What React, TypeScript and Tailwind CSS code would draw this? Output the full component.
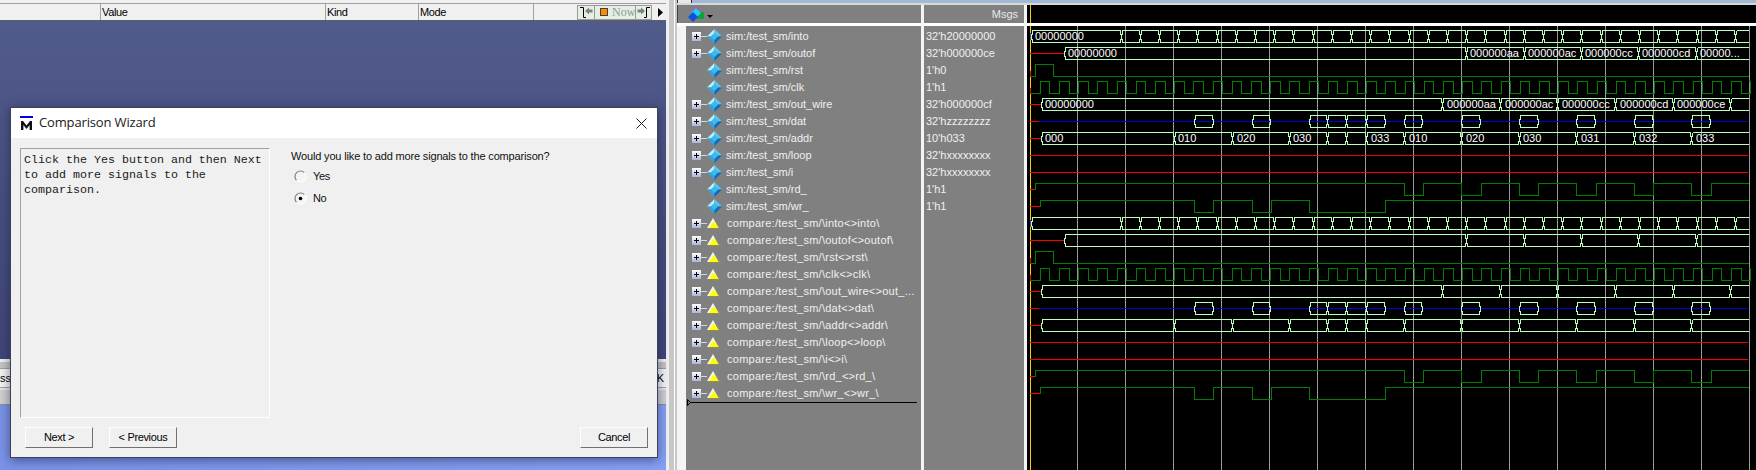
const SANS = "font-['Liberation_Sans',Arial,sans-serif]";

const ROW_H = 17;
const WAVE_END = 1748;
const rowTop = (i: number) => 30 + ROW_H * i;

// bus edges in page pixels, the viewBox of the wave svg is page coordinates
const intoEdges = [1031, ...Array.from({ length: 33 }, (_, k) => 1120.5 + 19.2 * k)];
const outofEdges = [1064, 1466, 1524, 1581, 1638, 1696];
const outWireEdges = [1041, 1442, 1500, 1557, 1615, 1673, 1730];
const addrEdges = [1041, 1174, 1232, 1289, 1327, 1346, 1366, 1404, 1461, 1519, 1576, 1634, 1691];
const datChunks = [
  [1194, 1213],
  [1252, 1270],
  [1309, 1327, 1346, 1366, 1385],
  [1404, 1422],
  [1461, 1480],
  [1519, 1538],
  [1576, 1595],
  [1634, 1653],
  [1691, 1710],
];
const rdEdges = [1404, 1423, 1461, 1481, 1519, 1538, 1576, 1596, 1634, 1653, 1691, 1711];
const wrEdges = [1194, 1213, 1252, 1271, 1309, 1385];

const outofLabels: [number, string][] = [
  [1068, "00000000"],
  [1470, "000000aa"],
  [1528, "000000ac"],
  [1585, "000000cc"],
  [1642, "000000cd"],
  [1700, "00000..."],
];
const outWireLabels: [number, string][] = [
  [1045, "00000000"],
  [1447, "000000aa"],
  [1505, "000000ac"],
  [1562, "000000cc"],
  [1620, "000000cd"],
  [1677, "000000ce"],
];
const addrLabels: [number, string][] = [
  [1045, "000"],
  [1178, "010"],
  [1237, "020"],
  [1293, "030"],
  [1371, "033"],
  [1409, "010"],
  [1466, "020"],
  [1523, "030"],
  [1581, "031"],
  [1639, "032"],
  [1696, "033"],
];

function busSegment(a: number, b: number, top: number, closed: boolean) {
  const t = top + 0.5;
  const bot = top + 12.5;
  const m = top + 6;
  const ax = Math.round(a) + 0.5;
  const bx = Math.round(b) + 0.5;
  const left = `M${ax + 1} ${t} V${m - 2} H${ax} V${m + 3} H${ax + 1} V${bot}`;
  if (!closed) return `${left} H${bx} M${ax + 1} ${t} H${bx}`;
  return `${left} H${bx - 1} V${m + 3} H${bx} V${m - 2} H${bx - 1} V${t} Z`;
}

function Bus({ row, edges, open = true }: { row: number; edges: number[]; open?: boolean }) {
  const top = rowTop(row);
  const all = open ? [...edges, WAVE_END] : edges;
  const d = all
    .slice(0, -1)
    .map((a, i) => busSegment(a, all[i + 1], top, !(open && i === all.length - 2)))
    .join(" ");
  return <path d={d} fill="none" stroke="#bcffbc" />;
}

// green logic trace, starts with a short red stub at the cursor
function Logic({ row, stub, startLow, edges }: { row: number; stub: number; startLow?: boolean; edges: number[] }) {
  const hi = rowTop(row) + 0.5;
  const lo = hi + 12;
  const mid = hi + 6;
  let level = true;
  let d = `M${stub + 0.5} ${startLow ? lo : mid} V${hi} `;
  for (const x of edges) {
    level = !level;
    d += `H${x + 0.5} V${level ? hi : lo} `;
  }
  d += `H${WAVE_END + 0.5}`;
  return (
    <>
      <path d={`M1030 ${startLow ? lo : mid} H${stub}`} stroke={startLow ? "#008000" : "#ff0000"} fill="none" />
      <path d={d} stroke="#008000" fill="none" />
    </>
  );
}

function Stub({ row, x }: { row: number; x: number }) {
  const y = rowTop(row) + 6.5;
  return <path d={`M1030 ${y} H${x}`} stroke="#ff0000" fill="none" />;
}

function SignalGroup({ base, labels }: { base: number; labels: boolean }) {
  const clkEdges = Array.from({ length: 74 }, (_, k) => Math.round(1049.4 + 9.6 * k));
  return (
    <g>
      <Bus row={base} edges={intoEdges} />
      <path d={`M1030.5 ${rowTop(base) + 3} V${rowTop(base) + 10}`} stroke="#4040c0" fill="none" />
      <Stub row={base + 1} x={1064} />
      <Bus row={base + 1} edges={outofEdges} />
      <Logic row={base + 2} stub={1035} startLow edges={[1053]} />
      <path d={`M1030.5 ${rowTop(base + 2) + 7} V${rowTop(base + 2) + 12}`} stroke="#ff0000" fill="none" />
      <Logic row={base + 3} stub={1040} startLow edges={clkEdges} />
      <path d={`M1030.5 ${rowTop(base + 3) + 7} V${rowTop(base + 3) + 12}`} stroke="#ff0000" fill="none" />
      <Stub row={base + 4} x={1041} />
      <Bus row={base + 4} edges={outWireEdges} />
      <Stub row={base + 5} x={1039} />
      <path d={`M1039 ${rowTop(base + 5) + 6.5} H${WAVE_END}`} stroke="#0000e0" fill="none" />
      {datChunks.map((chunk) => (
        <Bus key={chunk[0]} row={base + 5} edges={chunk} open={false} />
      ))}
      <Stub row={base + 6} x={1041} />
      <Bus row={base + 6} edges={addrEdges} />
      <path d={`M1030 ${rowTop(base + 7) + 6.5} H${WAVE_END}`} stroke="#f00000" fill="none" />
      <path d={`M1030 ${rowTop(base + 8) + 6.5} H${WAVE_END}`} stroke="#ff0000" fill="none" />
      <Logic row={base + 9} stub={1035} edges={rdEdges} />
      <Logic row={base + 10} stub={1040} edges={wrEdges} />
      {labels && (
        <g fill="#ffffff" fontSize="11" fontFamily="'Liberation Sans', Arial, sans-serif">
          <text x={1035} y={rowTop(base) + 10}>00000000</text>
          {outofLabels.map(([x, s]) => (
            <text key={x} x={x} y={rowTop(base + 1) + 10}>{s}</text>
          ))}
          {outWireLabels.map(([x, s]) => (
            <text key={x} x={x} y={rowTop(base + 4) + 10}>{s}</text>
          ))}
          {addrLabels.map(([x, s]) => (
            <text key={x} x={x} y={rowTop(base + 6) + 10}>{s}</text>
          ))}
        </g>
      )}
    </g>
  );
}

function Waves() {
  const grid = Array.from({ length: 15 }, (_, k) => 1077.5 + 48 * k);
  return (
    <svg width="729" height="444" viewBox="1027 26 729 444" shapeRendering="crispEdges" className="block">
      {grid.map((x) => (
        <path key={x} d={`M${x} 26 V470`} stroke="#9a9a9a" fill="none" />
      ))}
      <path d="M1030.5 26 V470" stroke="#ffc800" fill="none" />
      <SignalGroup base={0} labels />
      <SignalGroup base={11} labels={false} />
    </svg>
  );
}

function Diamond() {
  return (
    <svg width="15" height="15" viewBox="0 0 15 15" className="shrink-0">
      <polygon points="7.5,0 0,7.5 4,7.5 7.5,4" fill="#b8f0ff" />
      <polygon points="7.5,0 15,7.5 11,7.5 7.5,4" fill="#58c4f0" />
      <polygon points="0,7.5 7.5,15 7.5,11 4,7.5" fill="#30a4e0" />
      <polygon points="15,7.5 7.5,15 7.5,11 11,7.5" fill="#0c6cc0" />
      <polygon points="7.5,4 11,7.5 7.5,11 4,7.5" fill="#38bcf0" />
    </svg>
  );
}

function CompareTriangle() {
  return (
    <svg width="15" height="13" viewBox="0 0 15 13" className="shrink-0">
      <polygon points="6.5,1 15,12.5 1,12.5" fill="#8a8a60" />
      <polygon points="6,1 11.5,11 0,11" fill="#f4f4f0" />
      <polygon points="6.5,4.5 11.5,11 2,11" fill="#ffff00" />
    </svg>
  );
}

function PlusBox() {
  return (
    <svg width="15" height="9" viewBox="0 0 15 9" className="shrink-0" shapeRendering="crispEdges">
      <defs>
        <linearGradient id="plusFill" x1="0" y1="0" x2="0" y2="1">
          <stop offset="0" stopColor="#ffffff" />
          <stop offset="1" stopColor="#aab4dc" />
        </linearGradient>
      </defs>
      <rect x="0" y="0" width="9" height="9" fill="url(#plusFill)" />
      <path d="M2 4.5 H7 M4.5 2 V7" stroke="#000" fill="none" />
      <path d="M9 4.5 H15" stroke="#d8d8d8" fill="none" />
    </svg>
  );
}

const simRows: [string, string, boolean][] = [
  ["sim:/test_sm/into", "32'h20000000", true],
  ["sim:/test_sm/outof", "32'h000000ce", true],
  ["sim:/test_sm/rst", "1'h0", false],
  ["sim:/test_sm/clk", "1'h1", false],
  ["sim:/test_sm/out_wire", "32'h000000cf", true],
  ["sim:/test_sm/dat", "32'hzzzzzzzz", true],
  ["sim:/test_sm/addr", "10'h033", true],
  ["sim:/test_sm/loop", "32'hxxxxxxxx", true],
  ["sim:/test_sm/i", "32'hxxxxxxxx", true],
  ["sim:/test_sm/rd_", "1'h1", false],
  ["sim:/test_sm/wr_", "1'h1", false],
];

const compareRows = [
  "compare:/test_sm/\\into<>into\\",
  "compare:/test_sm/\\outof<>outof\\",
  "compare:/test_sm/\\rst<>rst\\",
  "compare:/test_sm/\\clk<>clk\\",
  "compare:/test_sm/\\out_wire<>out_...",
  "compare:/test_sm/\\dat<>dat\\",
  "compare:/test_sm/\\addr<>addr\\",
  "compare:/test_sm/\\loop<>loop\\",
  "compare:/test_sm/\\i<>i\\",
  "compare:/test_sm/\\rd_<>rd_\\",
  "compare:/test_sm/\\wr_<>wr_\\",
];

function WavePane() {
  return (
    <div className={`flex min-w-0 flex-1 flex-col ${SANS} text-[11px]`}>
      <div className="flex h-[3px] bg-[#a2b9d6]">
        <div className="h-full w-[15px] border-x border-[#303030] bg-[#e8e8e8]" />
      </div>
      <div className="h-[2px] bg-[#d8d8d8]" />
      <div className="flex flex-1">
        <div className="flex w-[244px] flex-col">
          <div className="flex h-[18px] items-center border-l border-[#404040] bg-[#808080] pl-[10px]">
            <svg width="16" height="16" viewBox="0 0 16 16">
              <polygon points="4,5 8,1 12,4 8,8" fill="#c040e0" />
              <rect x="9" y="6" width="7" height="7" fill="#10a040" />
              <polygon points="3,7 8,2 13,7 8,12" fill="#20d0f0" />
              <polygon points="0,11 5,6 10,11 5,16" fill="#1050e0" />
            </svg>
            <svg width="6" height="4" viewBox="0 0 6 4" className="ml-[3px] mt-[5px]">
              <polygon points="0,0 6,0 3,3" fill="#000" />
            </svg>
          </div>
          <div className="h-[3px] bg-white" />
          <div className="flex flex-1">
            <div className="w-[9px] bg-[#f4f4f4]" />
            <div className="flex-1 bg-[#808080] pt-[2px] text-[#f0f0f0]">
              {simRows.map(([name, , expand]) => (
                <div key={name} className="flex h-[17px] items-center pl-[6px]">
                  {expand ? <PlusBox /> : <div className="w-[15px] shrink-0" />}
                  <Diamond />
                  <span className="ml-[4px] whitespace-pre leading-none">{name}</span>
                </div>
              ))}
              {compareRows.map((name) => (
                <div key={name} className="flex h-[17px] items-center pl-[6px]">
                  <PlusBox />
                  <CompareTriangle />
                  <span className="ml-[5px] whitespace-pre leading-none tracking-[0.26px]">{name}</span>
                </div>
              ))}
              <div className="relative ml-[2px] mr-[4px] h-px bg-black">
                <svg width="4" height="7" viewBox="0 0 4 7" className="absolute -left-[1px] -top-[3px]">
                  <polygon points="0.5,0.5 3.5,3.5 0.5,6.5" fill="#808080" stroke="#000" />
                </svg>
              </div>
            </div>
          </div>
        </div>
        <div className="w-[3px] bg-[#f4f4f4]" />
        <div className="flex w-[100px] flex-col">
          <div className="flex h-[18px] items-center justify-end bg-[#808080] pr-[6px] text-[#e8e8e8]">Msgs</div>
          <div className="h-[3px] bg-white" />
          <div className="flex-1 bg-[#808080] pt-[2px] pl-[2px] text-[#f0f0f0]">
            {simRows.map(([name, msg]) => (
              <div key={name} className="flex h-[17px] items-center leading-none">
                {msg}
              </div>
            ))}
          </div>
        </div>
        <div className="w-[3px] bg-[#f4f4f4]" />
        <div className="flex w-[729px] flex-col bg-black">
          <div className="flex h-[18px] bg-black pl-[3px]">
            <div className="h-full w-px bg-[#ffc800]" />
          </div>
          <div className="h-[3px] bg-white" />
          <Waves />
        </div>
      </div>
    </div>
  );
}

function HeaderCell({ label, className }: { label: string; className: string }) {
  return (
    <div className={`flex h-full items-center border-l border-[#a0a0a0] pl-[1px] ${className}`}>{label}</div>
  );
}

function ListHeader() {
  return (
    <div className="flex h-[17px] items-center border-b border-[#606060] bg-[#f0f0f0] text-[11px] tracking-[-0.35px] text-black">
      <div className="w-[100px]" />
      <HeaderCell label="Value" className="w-[225px]" />
      <HeaderCell label="Kind" className="w-[93px]" />
      <HeaderCell label="Mode" className="w-[115px]" />
      <div className="h-full w-[44px] border-l border-[#a0a0a0]" />
      <div className="flex h-[15px] w-[75px] items-center border border-[#9a9a9a] bg-[#e4efe4]">
        <div className="flex h-full w-[17px] shrink-0 items-center justify-center border-r border-[#9a9a9a]">
          <svg width="14" height="12" viewBox="0 0 14 12">
            <path d="M1 1.5 H4.5 V11.5 H7" stroke="#000" fill="none" />
            <polygon points="6,5 10,1.5 10,3.5 13.5,3.5 13.5,6.5 10,6.5 10,8.5" fill="#808080" />
          </svg>
        </div>
        <div className="ml-[5px] size-[8px] shrink-0 border border-[#404040] bg-[#ff8c00]" />
        <span className="ml-[4px] font-['Liberation_Serif',serif] text-[12px] tracking-normal text-[#8c9c9c]">Now</span>
        <div className="ml-auto flex h-full w-[16px] shrink-0 items-center justify-center border-l border-[#9a9a9a]">
          <svg width="14" height="12" viewBox="0 0 14 12">
            <path d="M13 1.5 H9.5 V11.5 H7" stroke="#000" fill="none" />
            <polygon points="8,5 4,1.5 4,3.5 0.5,3.5 0.5,6.5 4,6.5 4,8.5" fill="#808080" />
          </svg>
        </div>
      </div>
      <svg width="5" height="9" viewBox="0 0 5 9" className="ml-[6px]">
        <polygon points="0,0 5,4.5 0,9" fill="#000" />
      </svg>
    </div>
  );
}

function Radio({ checked }: { checked?: boolean }) {
  return (
    <svg width="13" height="13" viewBox="0 0 13 13" className="shrink-0">
      <circle cx="6.5" cy="6.5" r="5.5" fill="#f4f4f4" />
      <path d="M2.6 10.4 A5.5 5.5 0 0 1 10.4 2.6" fill="none" stroke="#808080" strokeWidth="1.2" />
      <path d="M10.4 2.6 A5.5 5.5 0 0 1 2.6 10.4" fill="none" stroke="#ffffff" strokeWidth="1.2" />
      {checked && <circle cx="6.5" cy="6.5" r="1.8" fill="#000" />}
    </svg>
  );
}

function WizardButton({ label, className = "" }: { label: string; className?: string }) {
  return (
    <div
      className={`flex h-[21px] w-[68px] items-center justify-center border border-t-white border-l-white border-r-[#707070] border-b-[#707070] tracking-[-0.35px] text-black ${className}`}
    >
      {label}
    </div>
  );
}

function ComparisonWizard() {
  return (
    <div
      className={`absolute left-[10px] top-[107px] flex h-[351px] w-[648px] flex-col border border-[#3c4258] bg-[#f0f0f0] text-[11px] shadow-[0_2px_10px_rgba(20,24,60,0.55)] ${SANS}`}
    >
      <div className="flex h-[30px] items-center bg-white pl-[9px] pr-[10px]">
        <svg width="13" height="14" viewBox="0 0 13 14" className="shrink-0">
          <rect x="0" y="0" width="13" height="2" fill="#0000e0" />
          <path d="M1 14 V5 H3 L6.5 9.5 L10 5 H12 V14 H9.6 V9 L6.5 13 L3.4 9 V14 Z" fill="#101010" />
        </svg>
        <span className="ml-[6px] font-['Open_Sans',sans-serif] text-[13px] tracking-[-0.15px] text-[#202020]">Comparison Wizard</span>
        <svg width="11" height="11" viewBox="0 0 11 11" className="ml-auto">
          <path d="M0.5 0.5 L10.5 10.5 M10.5 0.5 L0.5 10.5" stroke="#202020" fill="none" />
        </svg>
      </div>
      <div className="flex flex-1 pl-[9px] pt-[10px]">
        <div className="h-[270px] w-[250px] shrink-0 border border-t-[#a0a0a0] border-l-[#a0a0a0] border-r-white border-b-white pl-[3px] pt-[4px] font-['Liberation_Mono',monospace] text-[11.67px] leading-[15px] text-[#202020]">
          Click the Yes button and then Next
          <br />
          to add more signals to the
          <br />
          comparison.
        </div>
        <div className="ml-[21px] text-[#101010]">
          <div className="tracking-[-0.16px]">Would you like to add more signals to the comparison?</div>
          <div className="ml-[3px] mt-[5px] flex h-[13px] items-center">
            <Radio />
            <span className="ml-[6px] tracking-[-0.35px]">Yes</span>
          </div>
          <div className="ml-[3px] mt-[9px] flex h-[13px] items-center">
            <Radio checked />
            <span className="ml-[6px] tracking-[-0.35px]">No</span>
          </div>
        </div>
      </div>
      <div className="flex pb-[9px] pl-[14px] pr-[9px]">
        <WizardButton label="Next >" />
        <WizardButton label="< Previous" className="ml-[16px]" />
        <WizardButton label="Cancel" className="ml-auto" />
      </div>
    </div>
  );
}

export default function App() {
  return (
    <div className={`relative flex h-[470px] w-[1756px] overflow-hidden bg-[#c8c8c8] ${SANS}`}>
      <div className="flex w-[666px] shrink-0 flex-col">
        <div className="h-[3px] bg-[#f0f0f0]" />
        <div className="h-px bg-[#a0a0a0]" />
        <ListHeader />
        <div className="h-[338px] bg-linear-to-b from-[#515b8b] to-[#3f4677]" />
        <div className="h-[3px] bg-[#f0f0f0]" />
        <div className="h-[6px] bg-[#c4c4c4]" />
        <div className="flex h-[20px] items-end justify-between border-y border-[#a0a0a0] bg-[#f4f4f4] pr-[2px] text-[11px] text-black">
          <span className="pb-[1px]">ss</span>
          <span className="pb-[1px]">K</span>
        </div>
        <div className="h-[2px] bg-[#e8e8e8]" />
        <div className="h-[15px] border-b border-[#909090] bg-[#d0d0d0]" />
        <div className="flex-1 bg-linear-to-r from-[#7a92e8] to-[#85a0f4]" />
      </div>
      <div className="flex w-[11px] shrink-0 bg-[#c8c8c8]">
        <div className="w-[3px] bg-[#f0f0f0]" />
        <div className="w-[5px]" />
        <div className="w-px bg-white" />
      </div>
      <WavePane />
      <ComparisonWizard />
    </div>
  );
}
